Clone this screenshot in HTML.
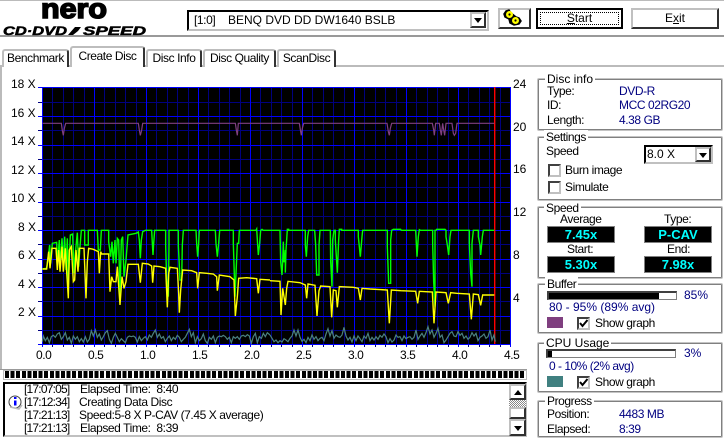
<!DOCTYPE html>
<html><head><meta charset="utf-8">
<style>
html,body{margin:0;padding:0;background:#fff}
body{position:relative;width:724px;height:441px;overflow:hidden;font:12px/14px "Liberation Sans","IPAGothic",sans-serif;color:#000;letter-spacing:-.42px}
.a{position:absolute;white-space:nowrap}
.t{position:absolute;white-space:nowrap;transform:translateY(-50%)}
.n{color:#000080}
.ts{letter-spacing:-.8px}
.r{position:absolute;background:#aaa}
.box{position:absolute;border:1px solid #808080;box-shadow:0 0 0 1px #c4c4c4;box-sizing:border-box;border-radius:1px}
.lg{position:absolute;background:#fff;padding:0 2px;white-space:nowrap;transform:translateY(-50%)}
.tab{position:absolute;box-sizing:border-box;border:2px solid #bdbdbd;border-bottom:0;border-right:2px solid #333;border-top-left-radius:3px;border-top-right-radius:3px;background:#fff;text-align:center}
.btn{position:absolute;box-sizing:border-box;background:#fff;border:2px solid;border-color:#c0c0c0 #303030 #303030 #c0c0c0;text-align:center}
.dd{position:absolute;box-sizing:border-box;background:#fff;border:2px solid;border-color:#c0c0c0 #303030 #303030 #c0c0c0}
.dd:after{content:"";position:absolute;left:50%;top:50%;margin:-2px 0 0 -4px;border:4px solid transparent;border-top:5px solid #000;border-bottom:0}
.up:after{border-top:0;border-bottom:5px solid #000}
.cb{position:absolute;box-sizing:border-box;width:13px;height:13px;background:#fff;border:2px solid;border-color:#404040 #c0c0c0 #c0c0c0 #404040}
.lcd{position:absolute;box-sizing:border-box;background:#000;border:1px solid #808080;color:#0ff;font:bold 13px/15px "Liberation Sans",sans-serif;letter-spacing:0;text-align:center;width:68px;height:17px}
.bar{position:absolute;box-sizing:border-box;border:1px solid #808080;border-top:2px solid #404040;border-left:2px solid #404040;background:#fff;height:9px;width:130px}
.bar i{position:absolute;left:0;top:0;bottom:0;background:#000}
svg{position:absolute;left:0;top:0}
</style></head><body>

<div class="r" style="left:0;top:0;width:724px;height:1px;background:#bbb"></div>
<div class="r" style="left:0;top:35px;width:724px;height:2px;background:#999"></div>
<div class="r" style="left:0;top:65px;width:724px;height:2px;background:#bbb"></div>
<div class="r" style="left:0;top:66px;width:2px;height:303px;background:#bbb"></div>
<div class="r" style="left:0;top:369px;width:527px;height:1px;background:#999"></div>

<svg width="150" height="40" viewBox="0 0 150 40">
<text x="41" y="18" font-family="Liberation Sans" font-weight="bold" font-size="28" textLength="66" lengthAdjust="spacingAndGlyphs" stroke="#000" stroke-width="1.6" letter-spacing="0">nero</text>
<text x="3" y="35" font-family="Liberation Sans" font-weight="bold" font-style="italic" font-size="11.5" textLength="64" lengthAdjust="spacingAndGlyphs" stroke="#000" stroke-width=".5" letter-spacing="0">CD·DVD</text>
<path d="M68 35 L75 27 H81 L78 31 L73 35Z" fill="#000"/>
<text x="83" y="35" font-family="Liberation Sans" font-weight="bold" font-style="italic" font-size="11.5" textLength="63" lengthAdjust="spacingAndGlyphs" stroke="#000" stroke-width=".5" letter-spacing="0">SPEED</text>
</svg>

<div class="a" style="left:187px;top:10px;width:302px;height:21px;box-sizing:border-box;border:2px solid;border-color:#000 #c0c0c0 #c0c0c0 #000;background:#fff"></div>
<div class="t" style="left:194px;top:20px">[1:0]</div>
<div class="t" style="left:228px;top:20px;letter-spacing:0">BENQ DVD DD DW1640 BSLB</div>
<div class="dd" style="left:470px;top:12px;width:16px;height:16px"></div>

<div class="btn" style="left:498px;top:8px;width:33px;height:21px"></div>
<svg width="724" height="40" viewBox="0 0 724 40">
<path d="M509 10l2 3l5 4l3 1l2 3l-2 3l-5 1l-4-2l-1-4l-4-2l-1-3l2-3z" fill="#000" stroke="#000" stroke-width="1.5"/>
<circle cx="509.500" cy="14.500" r="3.500" fill="#ff0"/><circle cx="515.500" cy="20.500" r="3.500" fill="#ff0"/>
<circle cx="509.500" cy="14.500" r="1.100" fill="#000"/><circle cx="515.500" cy="20.500" r="1.100" fill="#000"/>
</svg>
<div class="btn" style="left:536px;top:8px;width:87px;height:21px;border-color:#000;line-height:17px;outline:0;letter-spacing:0"><span style="position:absolute;left:2px;top:2px;right:2px;bottom:2px;border:1px dotted #000"></span><u>S</u>tart</div>
<div class="btn" style="left:631px;top:8px;width:88px;height:21px;line-height:17px;letter-spacing:0">E<u>x</u>it</div>

<div class="tab" style="left:2px;top:49px;width:67px;height:18px;line-height:15px">Benchmark</div>
<div class="tab" style="left:70px;top:46px;width:75px;height:21px;line-height:17px;z-index:2">Create Disc</div>
<div class="tab" style="left:146px;top:49px;width:56px;height:18px;line-height:15px">Disc Info</div>
<div class="tab" style="left:203px;top:49px;width:73px;height:18px;line-height:15px">Disc Quality</div>
<div class="tab" style="left:277px;top:49px;width:59px;height:18px;line-height:15px">ScanDisc</div>
<div class="r" style="left:72px;top:65px;width:71px;height:2px;background:#fff;z-index:3"></div>

<svg width="724" height="441" viewBox="0 0 724 441">
<rect x="42" y="87" width="469" height="257" fill="#000"/>
<path shape-rendering="crispEdges" stroke="#000080" fill="none" d="M52.5 87V347M63.5 87V347M73.5 87V347M84.5 87V347M104.5 87V347M115.5 87V347M125.5 87V347M136.5 87V347M156.5 87V347M167.5 87V347M177.5 87V347M188.5 87V347M208.5 87V347M219.5 87V347M229.5 87V347M240.5 87V347M260.5 87V347M271.5 87V347M281.5 87V347M292.5 87V347M312.5 87V347M323.5 87V347M333.5 87V347M344.5 87V347M364.5 87V347M375.5 87V347M385.5 87V347M396.5 87V347M416.5 87V347M427.5 87V347M437.5 87V347M448.5 87V347M468.5 87V347M479.5 87V347M489.5 87V347M500.5 87V347M38 330.5H511M38 301.5H511M38 273.5H511M38 244.5H511M38 216.5H511M38 187.5H511M38 159.5H511M38 130.5H511M38 102.5H511"/>
<path shape-rendering="crispEdges" stroke="#0000ff" fill="none" d="M42.5 87V347M94.5 87V347M146.5 87V347M198.5 87V347M250.5 87V347M302.5 87V347M354.5 87V347M406.5 87V347M458.5 87V347M510.5 87V347M38 87.5H511M38 116.5H511M38 145.5H511M38 173.5H511M38 202.5H511M38 230.5H511M38 259.5H511M38 287.5H511M38 316.5H511M38 344.5H511"/>
<rect x="494" y="87" width="1.4" height="257" fill="#f00"/>

<g transform="translate(0 80) scale(.33333)" fill="none">
<path vector-effect="non-scaling-stroke" stroke-width="1.2" stroke="#4a8080" d="M127 785L130 768L136 782L142 772L148 788L154 770L160 766L166 772L172 762L178 758L184 778L190 770L196 758L202 780L208 772L214 790L220 768L226 778L232 770L238 785L244 776L250 786L256 770L262 786L268 778L274 752L280 768L286 750L292 772L298 762L304 780L310 770L316 758L322 752L328 778L334 790L340 772L346 760L352 772L358 785L364 776L370 782L376 788L382 772L388 768L394 770L400 768L406 772L412 786L418 770L424 782L430 775L436 770L442 780L448 765L454 772L460 760L466 750L472 772L478 762L484 775L490 770L496 785L502 775L508 768L514 782L520 772L526 778L532 766L538 772L544 785L550 778L556 772L562 760L568 748L574 770L580 758L586 788L592 770L598 782L604 776L610 762L616 782L622 790L628 772L634 778L640 768L646 788L652 772L658 768L664 770L670 766L676 770L682 778L688 772L694 788L700 770L706 775L712 770L718 778L724 768L730 766L736 770L742 764L748 768L754 790L760 770L766 760L772 788L778 770L784 775L790 760L796 770L802 758L810 765"/>
<path vector-effect="non-scaling-stroke" stroke-width="1.2" stroke="#7f3f7f" d="M127 130H184L187 152L190 166L193 145L197 130H415L418 150L421 166L425 150L428 130H706L709 150L712 166L715 130H810"/>
<path vector-effect="non-scaling-stroke" stroke-width="1.4" stroke="#00ff00" d="M127 567L140 565L146 520L149 495L152 550L157 490L170 487L172 550L178 480L180 560L186 475L190 550L194 470L198 570L202 475L205 615L211 465L218 462L222 580L226 520L232 458L236 560L240 500L244 451H254V495H265V451H292L295 510H301L304 451H326V485L332 530L336 485L340 550L345 480L348 550L352 475L356 480L360 645L364 480L368 470L372 590L378 540L384 465L408 460L415 456L418 480L421 535L424 480L428 455L436 451H455L457 490L459 525L461 490L464 451H497V495L500 600L505 650L507 495V451H535V495L540 600H545L547 495L550 451H588L590 490L593 530L596 490L598 451H646L648 490L652 530L656 490L659 451H700V490L705 650L712 490H716L718 451H768L770 447L773 495L775 525L779 490L782 451L786 448L790 451H810"/>
<path vector-effect="non-scaling-stroke" stroke-width="1.4" stroke="#ffff00" d="M127 567L140 567L146 515L150 565L156 505L168 505L172 570L176 510L180 575L186 500L190 575L196 505L200 575L205 655L208 510L214 500L220 605L224 600L228 510L234 575L238 505L252 505L258 655L262 545L266 505L280 508L295 515L298 580L302 515L305 522H326L330 635L335 590L340 605H348L352 560L360 675L366 590L372 625L378 605L384 553H415L421 608L427 550L445 552L455 558L458 608L462 558L480 560L497 565L502 682L506 580L510 562L532 565L536 640L538 698L542 630L548 570L575 572L590 578L593 625L598 578L620 580L640 582L650 590L652 632L658 585L690 590L702 600L706 708L712 650L716 595L740 593L770 596L775 640L780 598L810 600"/>
</g>
<g transform="translate(270 80) scale(.33333)" fill="none">
<path vector-effect="non-scaling-stroke" stroke-width="1.2" stroke="#4a8080" d="M0 765L6 775L12 785L18 780L24 788L30 782L36 786L42 776L48 780L54 785L60 775L66 768L72 750L78 768L84 750L90 772L96 784L102 778L108 788L114 772L120 782L126 765L132 778L138 770L144 782L150 775L156 772L162 782L168 762L174 746L180 768L186 752L192 775L198 765L204 770L210 772L216 765L222 742L228 768L234 780L240 772L246 786L252 768L258 782L264 768L270 776L276 785L282 768L288 775L294 760L300 782L306 772L312 780L318 770L324 778L330 766L336 772L342 762L348 770L354 788L360 776L366 786L372 780L378 765L384 772L390 770L396 782L402 768L408 776L414 772L420 770L426 778L432 772L438 750L444 778L450 768L456 760L462 772L468 758L474 740L480 762L486 750L492 772L498 760L504 745L510 772L516 765L522 788L528 780L534 770L540 760L546 755L552 768L558 770L564 755L570 766L576 760L582 775L588 768L594 778L600 772L606 758L612 768L618 760L624 782L630 772L636 768L642 762L648 775L654 770L660 750L666 780L672 765L676 785"/>
<path vector-effect="non-scaling-stroke" stroke-width="1.2" stroke="#7f3f7f" d="M0 130H88L92 155L94 166L97 145L101 130H351L355 155L358 166L361 145L365 130H487L491 150L493 166L497 130H508L511 150L514 166L518 130L521 150L524 166L528 130H546L550 160L553 166L557 160L561 130H673"/>
<path vector-effect="non-scaling-stroke" stroke-width="1.4" stroke="#00ff00" d="M0 451H30L32 545L36 585L38 545L40 485L42 545H44L46 510V578L48 510L50 480L52 448H56V451H106V495L109 530L113 470L116 451H134L137 495L140 585H147V495L150 451H181L182 545L186 620L188 480L192 451H196V480L202 578L206 480L208 448H215V451H265V470L271 530L276 470L278 451H352V500L356 610H362V480L365 451L370 448H392L394 451H437L441 530L445 470L448 449L452 451H488V490L491 605L495 680V451H498L500 448H525L528 451V470L532 495L536 525L540 470L543 451H598V490L602 580L606 620V490L610 451H625V470L630 495L632 525L637 470L640 451H673"/>
<path vector-effect="non-scaling-stroke" stroke-width="1.4" stroke="#ffff00" d="M0 602L30 604L33 705L38 625L46 675L50 625L54 604L90 608L106 615L110 655L114 612L135 616L141 708L147 632L152 618L180 620L185 712L190 630L198 632L202 682L208 620L250 622L265 625L271 660L276 625L300 627L352 630L358 730L364 630L392 632L437 634L443 670L448 634L487 636L492 730L498 636L528 638L535 670L542 638L560 640L598 642L604 718L610 642L625 644L632 676L638 645H673"/>
</g>
</svg>

<div class="t" style="left:11px;top:84px;letter-spacing:0">18 X</div>
<div class="t" style="left:11px;top:113px;letter-spacing:0">16 X</div>
<div class="t" style="left:11px;top:141px;letter-spacing:0">14 X</div>
<div class="t" style="left:11px;top:170px;letter-spacing:0">12 X</div>
<div class="t" style="left:11px;top:198px;letter-spacing:0">10 X</div>
<div class="t" style="left:18px;top:227px;letter-spacing:0">8 X</div>
<div class="t" style="left:18px;top:255px;letter-spacing:0">6 X</div>
<div class="t" style="left:18px;top:284px;letter-spacing:0">4 X</div>
<div class="t" style="left:18px;top:312px;letter-spacing:0">2 X</div>

<div class="t" style="left:513px;top:84px;letter-spacing:0">24</div>
<div class="t" style="left:513px;top:127px;letter-spacing:0">20</div>
<div class="t" style="left:513px;top:169px;letter-spacing:0">16</div>
<div class="t" style="left:513px;top:212px;letter-spacing:0">12</div>
<div class="t" style="left:513px;top:255px;letter-spacing:0">8</div>
<div class="t" style="left:513px;top:298px;letter-spacing:0">4</div>

<div class="t" style="left:36px;top:355px">0.0</div>
<div class="t" style="left:88px;top:355px">0.5</div>
<div class="t" style="left:140px;top:355px">1.0</div>
<div class="t" style="left:192px;top:355px">1.5</div>
<div class="t" style="left:244px;top:355px">2.0</div>
<div class="t" style="left:296px;top:355px">2.5</div>
<div class="t" style="left:348px;top:355px">3.0</div>
<div class="t" style="left:400px;top:355px">3.5</div>
<div class="t" style="left:452px;top:355px">4.0</div>
<div class="t" style="left:504px;top:355px">4.5</div>

<!-- progress stripe -->
<div class="a" style="left:3px;top:370px;width:524px;height:10px;box-sizing:border-box;border:1px solid #bbb;background:#fff"></div>
<div class="a" style="left:5px;top:371px;width:520px;height:7px;background:repeating-linear-gradient(90deg,#000 0,#000 4px,#fff 4px,#fff 5.6px)"></div>

<!-- log -->
<div class="a" style="left:3px;top:382px;width:524px;height:55px;box-sizing:border-box;border:2px solid;border-color:#000 #c0c0c0 #c0c0c0 #000;background:#fff"></div>
<svg width="40" height="441" viewBox="0 0 40 441">
<path d="M9 402a6 6 0 1 1 12 0a6 6 0 0 1-12 0" fill="#fff" stroke="#444"/>
<path d="M10 407l9 2l3-4" fill="none" stroke="#bbb" stroke-width="1.5"/>
<rect x="14" y="397" width="2.5" height="2" fill="#00f"/><rect x="14" y="400.5" width="2.5" height="5" fill="#00f"/>
</svg>
<div class="t ts" style="left:24px;top:389px">[17:07:05]</div><div class="t" style="left:80px;top:389px">Elapsed Time:&nbsp; 8:40</div>
<div class="t ts" style="left:24px;top:402px">[17:12:34]</div><div class="t" style="left:79px;top:402px">Creating Data Disc</div>
<div class="t ts" style="left:24px;top:415px">[17:21:13]</div><div class="t" style="left:79px;top:415px">Speed:5-8 X P-CAV (7.45 X average)</div>
<div class="t ts" style="left:24px;top:428px">[17:21:13]</div><div class="t" style="left:80px;top:428px">Elapsed Time:&nbsp; 8:39</div>

<div class="dd up" style="left:509px;top:384px;width:17px;height:16px"></div>
<div class="a" style="left:509px;top:400px;width:17px;height:7px;background:repeating-conic-gradient(#888 0 25%,#fff 0 50%) 0 0/2px 2px"></div>
<div class="a" style="left:509px;top:407px;width:17px;height:12px;box-sizing:border-box;border:2px solid;border-color:#c0c0c0 #303030 #303030 #c0c0c0;background:#fff"></div>
<div class="dd" style="left:509px;top:419px;width:17px;height:17px"></div>

<!-- Disc info -->
<div class="box" style="left:538px;top:79px;width:184px;height:51px"></div>
<div class="lg" style="left:545px;top:79px;letter-spacing:0">Disc info</div>
<div class="t" style="left:547px;top:91px">Type:</div><div class="t n" style="left:619px;top:91px">DVD-R</div>
<div class="t" style="left:547px;top:105px">ID:</div><div class="t n" style="left:619px;top:105px">MCC 02RG20</div>
<div class="t" style="left:547px;top:120px">Length:</div><div class="t n" style="left:619px;top:120px">4.38 GB</div>

<!-- Settings -->
<div class="box" style="left:538px;top:137px;width:184px;height:63px"></div>
<div class="lg" style="left:544px;top:137px">Settings</div>
<div class="t" style="left:546px;top:151px">Speed</div>
<div class="a" style="left:644px;top:145px;width:69px;height:19px;box-sizing:border-box;border:2px solid;border-color:#000 #c0c0c0 #c0c0c0 #000;background:#fff"></div>
<div class="t" style="left:647px;top:154px;letter-spacing:0">8.0 X</div>
<div class="dd" style="left:695px;top:147px;width:16px;height:15px"></div>
<div class="cb" style="left:548px;top:164px"></div>
<div class="t" style="left:565px;top:170px">Burn image</div>
<div class="cb" style="left:548px;top:181px"></div>
<div class="t" style="left:565px;top:187px">Simulate</div>

<!-- Speed -->
<div class="box" style="left:538px;top:207px;width:184px;height:71px"></div>
<div class="lg" style="left:544px;top:208px">Speed</div>
<div class="t" style="left:560px;top:219px">Average</div>
<div class="t" style="left:664px;top:219px">Type:</div>
<div class="lcd" style="left:547px;top:226px">7.45x</div>
<div class="lcd" style="left:644px;top:226px">P-CAV</div>
<div class="t" style="left:567px;top:249px">Start:</div>
<div class="t" style="left:667px;top:249px">End:</div>
<div class="lcd" style="left:547px;top:256px">5.30x</div>
<div class="lcd" style="left:644px;top:256px">7.98x</div>

<!-- Buffer -->
<div class="box" style="left:538px;top:284px;width:184px;height:49px"></div>
<div class="lg" style="left:545px;top:284px">Buffer</div>
<div class="bar" style="left:547px;top:291px"><i style="width:110px"></i></div>
<div class="t n" style="left:684px;top:295px;letter-spacing:0">85%</div>
<div class="t n" style="left:549px;top:307px;letter-spacing:0">80 - 95% (89% avg)</div>
<div class="a" style="left:547px;top:317px;width:16px;height:11px;background:#7f3f7f"></div>
<div class="cb" style="left:577px;top:317px"></div>
<div class="t" style="left:595px;top:323px">Show graph</div>

<!-- CPU -->
<div class="box" style="left:538px;top:343px;width:184px;height:49px"></div>
<div class="lg" style="left:544px;top:343px;letter-spacing:0">CPU Usage</div>
<div class="bar" style="left:546px;top:349px"><i style="width:4px"></i></div>
<div class="t n" style="left:684px;top:353px;letter-spacing:0">3%</div>
<div class="t n" style="left:549px;top:366px;letter-spacing:-.5px">0 - 10% (2% avg)</div>
<div class="a" style="left:547px;top:376px;width:16px;height:11px;background:#408080"></div>
<div class="cb" style="left:577px;top:376px"></div>
<div class="t" style="left:595px;top:382px">Show graph</div>
<svg width="724" height="441" viewBox="0 0 724 441"><path d="M580 382l2.500 3l5-6M580 323l2.500 3l5-6" fill="none" stroke="#000" stroke-width="2"/></svg>

<!-- Progress -->
<div class="box" style="left:538px;top:401px;width:184px;height:36px"></div>
<div class="lg" style="left:545px;top:401px">Progress</div>
<div class="t" style="left:547px;top:414px">Position:</div><div class="t n" style="left:619px;top:414px">4483 MB</div>
<div class="t" style="left:547px;top:429px">Elapsed:</div><div class="t n" style="left:619px;top:429px">8:39</div>

</body></html>
